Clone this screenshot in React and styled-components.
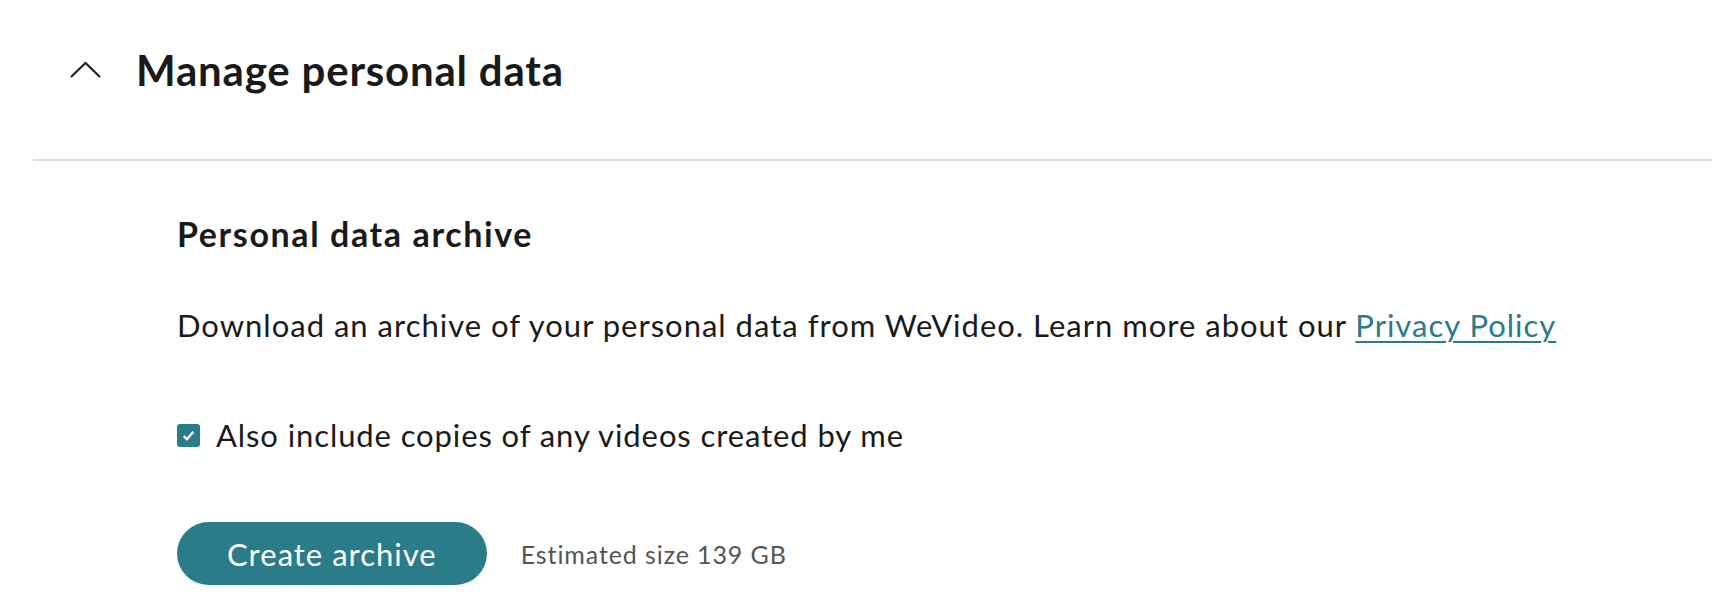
import React from 'react';
import styled, { createGlobalStyle } from 'styled-components';

const GlobalStyle = createGlobalStyle`
  body {
    margin: 0;
    background: #ffffff;
    font-family: Lato, "Open Sans", sans-serif;
    color: #1a1a1a;
  }
`;

const Section = styled.section`
  margin-left: 33px;
`;

const Header = styled.div`
  display: flex;
  align-items: center;
  gap: 34px;
  padding: 45px 0 64px 36px;
  border-bottom: 2px solid #dcdcdc;
`;

const Chevron = styled.svg`
  width: 33px;
  height: 18px;
  flex-shrink: 0;
`;

const Title = styled.h2`
  margin: 0;
  font-size: 42px;
  line-height: 50px;
  font-weight: 700;
  letter-spacing: 0.8px;
  color: #1a1a1a;
`;

const Body = styled.div`
  padding: 53px 0 0 144px;
`;

const SubTitle = styled.h3`
  margin: 0;
  font-size: 34px;
  line-height: 40px;
  font-weight: 700;
  letter-spacing: 1.6px;
`;

const Text = styled.p`
  margin: 53px 0 0;
  font-size: 31px;
  line-height: 37px;
  letter-spacing: 1px;
`;

const Link = styled.a`
  color: #2a7c88;
  text-decoration: underline;
  text-decoration-thickness: 2px;
  text-underline-offset: 4px;
`;

const CheckRow = styled.label`
  display: flex;
  align-items: center;
  gap: 16px;
  margin-top: 73px;
  font-size: 31px;
  line-height: 37px;
  letter-spacing: 0.9px;
`;

const Box = styled.span`
  width: 23px;
  height: 23px;
  border-radius: 3px;
  background: #2a7c88;
  display: flex;
  align-items: center;
  justify-content: center;
`;

const Actions = styled.div`
  display: flex;
  align-items: center;
  gap: 34px;
  margin-top: 68px;
`;

const Button = styled.button`
  height: 63px;
  padding: 0 50px;
  border: none;
  border-radius: 32px;
  background: #2a7c88;
  color: #ffffff;
  font-family: Lato, sans-serif;
  font-size: 31px;
  letter-spacing: 1px;
`;

const Hint = styled.span`
  font-size: 25px;
  letter-spacing: 0.9px;
  color: #555555;
`;

const App = () => (
  <>
    <GlobalStyle />
    <Section>
      <Header>
        <Chevron viewBox="0 0 33 18">
          <polyline points="2,16 16.5,2 31,16" fill="none" stroke="#1a1a1a" strokeWidth="2" />
        </Chevron>
        <Title>Manage personal data</Title>
      </Header>
      <Body>
        <SubTitle>Personal data archive</SubTitle>
        <Text>
          Download an archive of your personal data from WeVideo. Learn more about our{' '}
          <Link href="#">Privacy Policy</Link>
        </Text>
        <CheckRow>
          <Box>
            <svg width="15" height="15" viewBox="0 0 14 14">
              <polyline points="2.5,7.5 5.5,10.5 11.5,3.5" fill="none" stroke="#fff" strokeWidth="2.2" />
            </svg>
          </Box>
          Also include copies of any videos created by me
        </CheckRow>
        <Actions>
          <Button>Create archive</Button>
          <Hint>Estimated size 139 GB</Hint>
        </Actions>
      </Body>
    </Section>
  </>
);

export default App;
